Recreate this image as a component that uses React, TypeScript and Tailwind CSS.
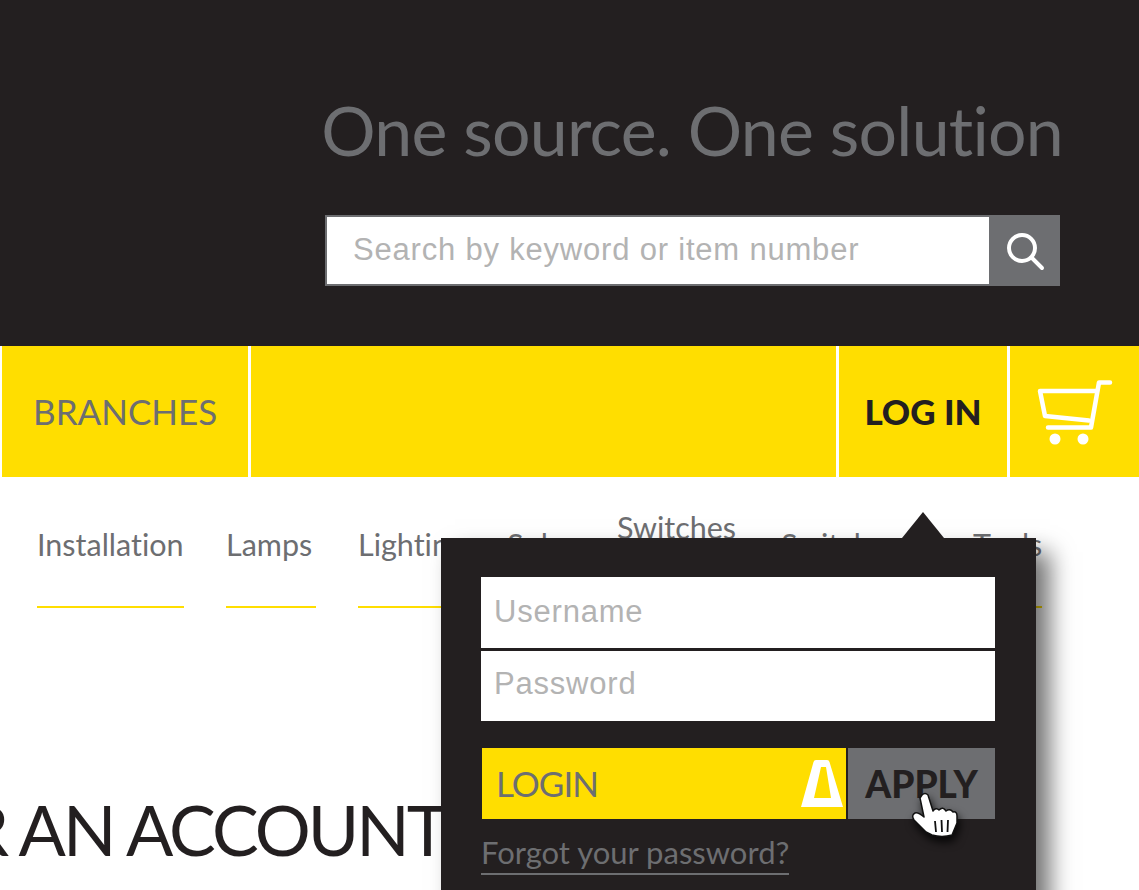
import React from 'react'

const NAV_ITEMS = [
  { label: 'Installation', width: 'w-[147px]' },
  { label: 'Lamps', width: 'w-[90px]' },
  { label: 'Lighting', width: 'w-[107px]' },
  { label: 'Solar', width: 'w-[68px]' },
  { label: 'Switches\n& Sockets', width: 'w-[122px]' },
  { label: 'Switchgear', width: 'w-[150px]' },
  { label: 'Tools', width: 'w-[69px]' },
]

const CartIcon = () => (
  <svg viewBox="1036 378 78 68" className="w-[78px] h-[68px]" fill="none" stroke="white" strokeWidth="4.5" strokeLinecap="round" strokeLinejoin="round">
    <path d="M1110 382.500H1099L1091 427.500H1048" />
    <path d="M1097 391H1040L1045 416L1089 420.500" />
    <circle cx="1055" cy="439" r="5.500" fill="white" stroke="none" />
    <circle cx="1083" cy="439" r="5.500" fill="white" stroke="none" />
  </svg>
)

const SearchIcon = () => (
  <svg viewBox="0 0 40 40" className="w-10 h-10" fill="none" stroke="white" strokeWidth="4" strokeLinecap="round">
    <circle cx="17" cy="17" r="13" />
    <path d="M26.500 26.500L37 37" />
  </svg>
)

const DeltaIcon = () => (
  <svg viewBox="0 0 42 47" className="w-[42px] h-[47px]">
    <path
      fillRule="evenodd"
      fill="white"
      d="M12.500 2Q13 0 15 0H26Q28 0 28.500 2L42 47H0ZM20 7L13 38H30L25 7Z"
    />
  </svg>
)

const HandCursor = () => (
  <svg viewBox="910 790 50 50" className="w-[50px] h-[50px] drop-shadow-[2px_5px_4px_rgba(0,0,0,0.8)]">
    <path
      fill="white"
      stroke="#111"
      strokeWidth="1.500"
      strokeLinejoin="round"
      d="M922 795Q925 792 928 795L933 811Q936 807 939 810Q943 806 946 811Q950 808 953 812Q957 811 957 816L957 823L952 835Q942 838 932 835L926 832L914 820Q911 815 915 813Q918 812 924 817L920 798Z"
    />
    <path d="M935 821L936 832M941.500 820L942 832M948 820L947.500 832" stroke="#111" strokeWidth="1.800" fill="none" />
  </svg>
)

export default function App() {
  return (
    <div className="relative w-[1139px] h-[890px] overflow-hidden bg-white font-['Lato',sans-serif] [font-variant-ligatures:none]">
      {/* Header */}
      <div className="h-[346px] bg-[#231f20] flex flex-col items-end pr-[79px] pt-[90px]">
        <h1 className="text-[68px] leading-[80px] tracking-[-0.75px] text-[#6d6e71] whitespace-nowrap -mr-[3px]">One source. One solution</h1>
        <div className="flex h-[71px] w-[735px] mt-[45px]">
          <input
            placeholder="Search by keyword or item number"
            className="flex-1 min-w-0 bg-white border-2 border-r-0 border-[#6d6e71] pl-[26px] text-[31px] tracking-[0.8px] font-['Liberation_Sans',sans-serif] placeholder:text-[#b3b3b3] outline-none"
          />
          <button className="w-[71px] bg-[#6d6e71] flex items-center justify-center">
            <SearchIcon />
          </button>
        </div>
      </div>

      {/* Yellow bar */}
      <div className="flex h-[131px] pl-[2px] gap-[3px]">
        <div className="w-[246px] bg-[#ffde00] flex items-center pl-[31px] text-[35px] text-[#6d6e71]">BRANCHES</div>
        <div className="w-[585px] bg-[#ffde00]" />
        <div className="w-[168px] bg-[#ffde00] flex items-center justify-center text-[35px] font-black text-[#231f20]">LOG IN</div>
        <div className="flex-1 bg-[#ffde00] flex items-center pl-[26px] pt-[1px]">
          <CartIcon />
        </div>
      </div>

      {/* Category nav */}
      <nav className="flex pt-[28px] pl-[37px] gap-[42px]">
        {NAV_ITEMS.map((item) => (
          <a key={item.label} className={`${item.width} shrink-0 h-[103px] pb-[23px] flex items-center whitespace-pre border-b-2 border-[#ffde00] text-[30.500px] leading-[34px] text-[#6d6e71]`}>
            {item.label}
          </a>
        ))}
      </nav>

      <h2 className="mt-[181px] -ml-[124px] text-[70px] leading-[80px] tracking-[-3px] text-[#231f20] whitespace-nowrap">FOR AN ACCOUNT</h2>

      {/* Login popover */}
      <div className="absolute left-[441px] top-[538px] w-[595px] h-[380px] bg-[#231f20] pl-[40px] pr-[41px] pt-[39px] shadow-[14px_14px_22px_rgba(0,0,0,0.55)]">
        <div className="absolute left-[461px] -top-[26px] w-0 h-0 border-l-[21px] border-r-[21px] border-b-[26px] border-l-transparent border-r-transparent border-b-[#231f20]" />
        <div className="flex flex-col gap-[3px]">
          <input placeholder="Username" className="h-[71px] bg-white pl-[13px] pb-[2px] text-[31px] tracking-[0.8px] font-['Liberation_Sans',sans-serif] placeholder:text-[#b3b3b3] outline-none" />
          <input placeholder="Password" className="h-[70px] bg-white pl-[13px] pb-[4px] text-[31px] tracking-[0.8px] font-['Liberation_Sans',sans-serif] placeholder:text-[#b3b3b3] outline-none" />
        </div>
        <div className="flex h-[71px] mt-[27px] ml-[1px] gap-[2px]">
          <button className="w-[364px] bg-[#ffde00] flex items-center justify-between pl-[14px] pr-[3px] text-[35px] tracking-[-1px] text-[#6d6e71]">
            <span>LOGIN</span>
            <DeltaIcon />
          </button>
          <button className="flex-1 bg-[#6d6e71] text-[37px] font-black text-[#231f20]">APPLY</button>
        </div>
        <a className="block w-fit mt-[13px] border-b-2 border-[#6d6e71] text-[31px] leading-[41px] text-[#6d6e71]">Forgot your password?</a>
        <div className="absolute left-[469px] top-[252px]">
          <HandCursor />
        </div>
      </div>
    </div>
  )
}
